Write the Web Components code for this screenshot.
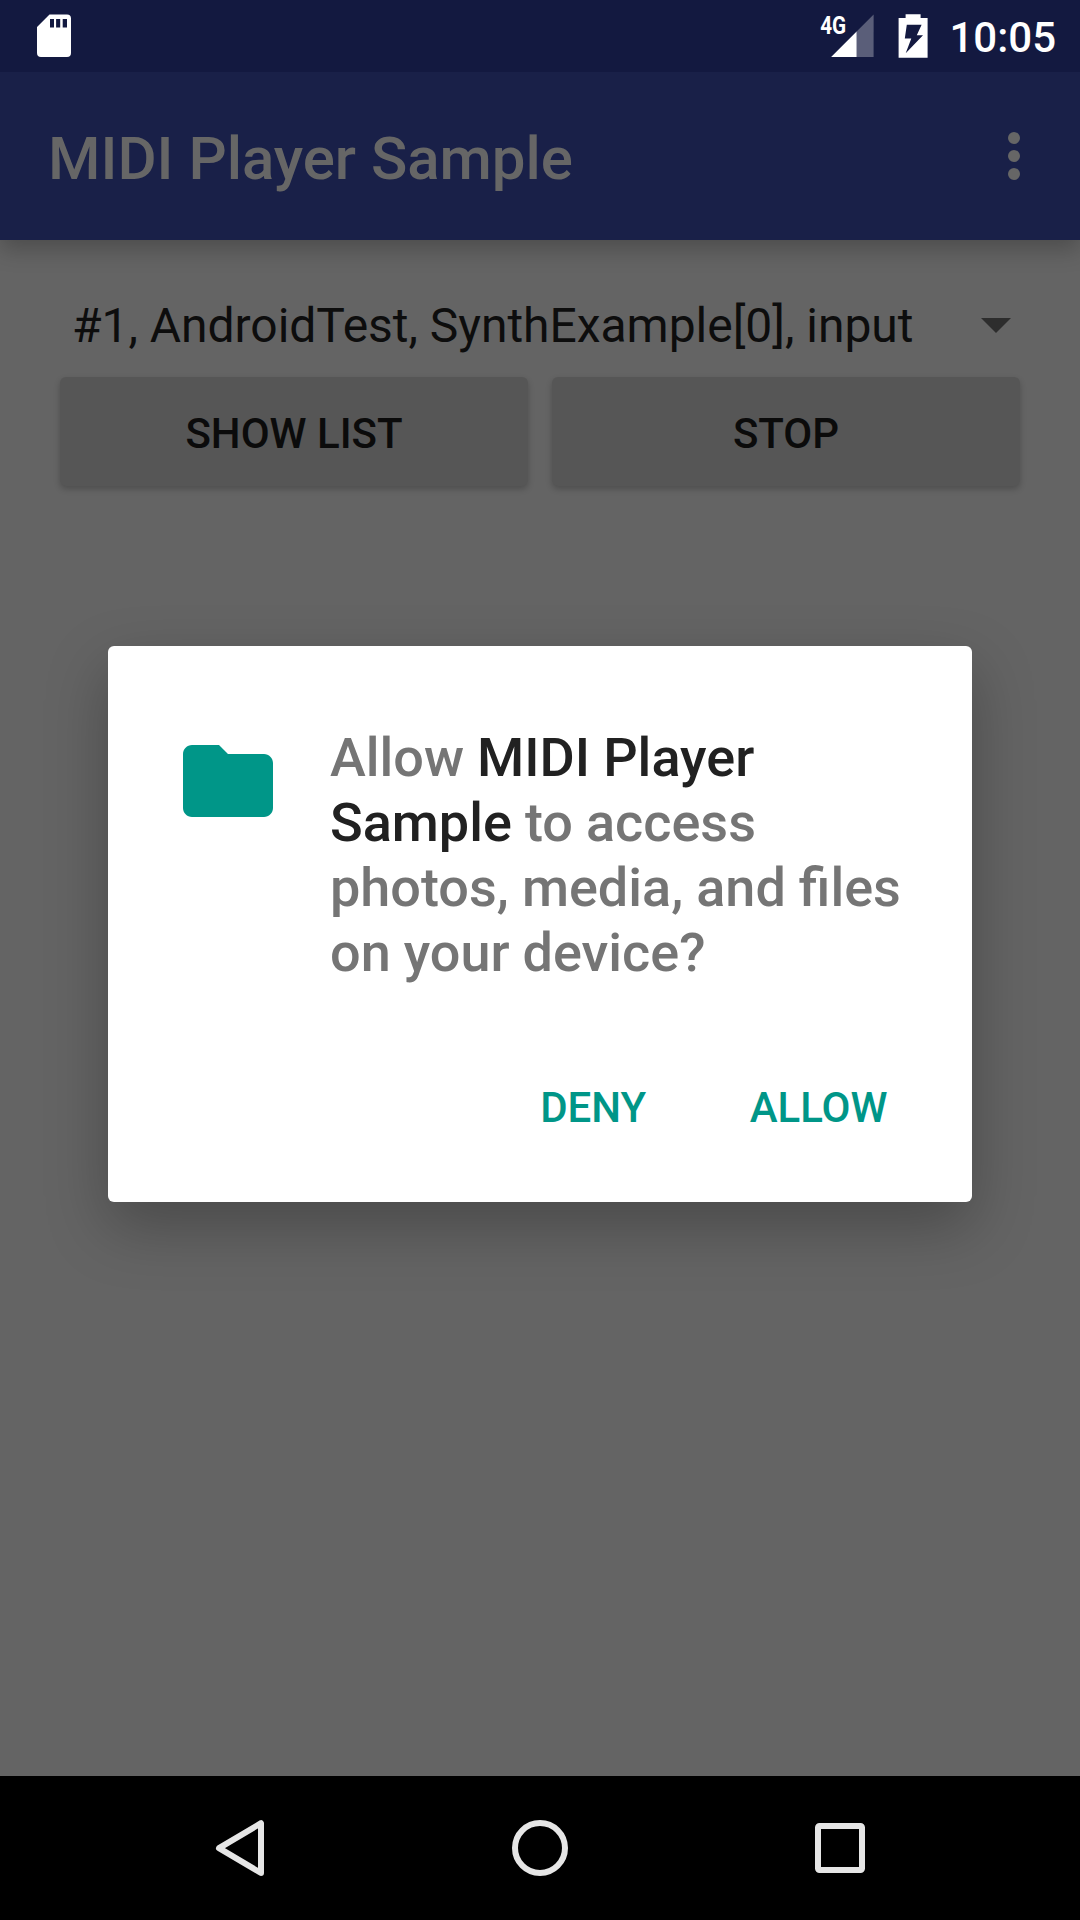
<!DOCTYPE html>
<html lang="en">
<head>
<meta charset="utf-8">
<title>MIDI Player Sample</title>
<style>
html,body{margin:0;padding:0;background:#646464}
body{width:1080px;height:1920px;overflow:hidden;font-family:Roboto,"Noto Sans",sans-serif}
</style>
</head>
<body>
<phone-screen>
  <status-bar slot="status" time="10:05"></status-bar>
  <app-bar slot="bar">MIDI Player Sample</app-bar>
  <device-spinner>#1, AndroidTest, SynthExample[0], input</device-spinner>
  <button-row>
    <raised-button>SHOW LIST</raised-button>
    <raised-button>STOP</raised-button>
  </button-row>
  <permission-dialog slot="dialog">
    <span>Allow <b>MIDI Player<br>Sample</b> to access<br>photos, media, and files<br>on your device?</span>
    <flat-button slot="actions">DENY</flat-button>
    <flat-button slot="actions">ALLOW</flat-button>
  </permission-dialog>
  <nav-bar slot="nav"></nav-bar>
</phone-screen>
<script>
const define = (name, markup, setup) => {
  const template = document.createElement('template');
  template.innerHTML = markup;
  customElements.define(name, class extends HTMLElement {
    constructor() {
      super();
      this.attachShadow({mode: 'open'}).append(template.content.cloneNode(true));
    }
    connectedCallback() { if (setup) setup(this); }
  });
};

define('phone-screen', `<style>
:host{display:flex;flex-direction:column;position:relative;width:1080px;height:1920px;background:#646464;overflow:hidden}
main{flex:1;display:flex;flex-direction:column;padding:48px 48px 0}
.layer{position:absolute;left:108px;top:646px}
</style>
<slot name="status"></slot><slot name="bar"></slot><main><slot></slot></main><slot name="nav"></slot>
<div class="layer"><slot name="dialog"></slot></div>`);

define('status-bar', `<style>
:host{display:flex;height:72px;background:#131940;color:#fff;justify-content:space-between;position:relative;z-index:2}
svg{display:block}
.right{display:flex}
time{font-size:42px;font-weight:500;line-height:72px;padding:2px 24px 0 0;height:70px;white-space:nowrap}
</style>
<svg width="108" height="72" viewBox="0 0 108 72"><path fill="#fff" fill-rule="evenodd" d="M49.5 14.6H67Q71 14.6 71 18.6V53Q71 57 67 57H41Q37 57 37 53V27ZM50 19V27.5H54V19ZM56.1 19V27.5H60.2V19ZM62.7 19V27.5H67V19Z"/></svg>
<div class="right">
<svg width="140" height="72" viewBox="809.4 0 140 72"><text x="820.6" y="33.6" fill="#fff" font-size="26.5" font-weight="700" textLength="26" lengthAdjust="spacingAndGlyphs">4G</text>
<path fill="#5a5e79" d="M857 31.5L874 14.5V57H857Z"/><path fill="#fff" d="M831.5 57L857 31.5V57Z"/>
<path fill="#fff" fill-rule="evenodd" d="M899 18H906V14.3H921V18H928V57.7H899ZM907.2 24.8L905.2 38.6H911.7L906.1 53.2L923.4 35.2H917.2L922 24.8Z"/></svg>
<time></time></div>`, el => { el.shadowRoot.querySelector('time').textContent = el.getAttribute('time'); });

define('app-bar', `<style>
:host{display:flex;align-items:center;justify-content:space-between;height:168px;background:#192048;color:#666;font-size:60px;font-weight:500;position:relative;z-index:1;box-shadow:0 9px 22px rgba(0,0,0,.24)}
.title{padding:0 0 0 48px;line-height:72px;margin-top:6px;letter-spacing:-.03px}
</style>
<div class="title"><slot></slot></div>
<svg width="132" height="168" viewBox="948 72 132 168" fill="#666"><circle cx="1014" cy="138" r="6"/><circle cx="1014" cy="156" r="6"/><circle cx="1014" cy="174" r="6"/></svg>`);

define('device-spinner', `<style>
:host{display:flex;align-items:center;justify-content:space-between;height:77px;padding:0 21px 0 24px;color:#0d0d0d;font-size:48px;line-height:75px;white-space:nowrap;letter-spacing:-.03px}
span{margin-top:-2px}
svg{display:block;margin-top:-2px}
</style><span><slot></slot></span><svg width="30" height="15" viewBox="0 0 30 15"><path d="M0 0H30L15 15Z" fill="#2d2d2d"/></svg>`);

define('button-row', `<style>:host{display:flex;gap:24px;padding:12px}::slotted(*){flex:1}</style><slot></slot>`);

define('raised-button', `<style>
:host{display:flex;align-items:center;justify-content:center;height:109px;border-radius:6px;background:#565656;color:#0b0b0b;font-size:42px;font-weight:500;box-shadow:0 3px 6px rgba(0,0,0,.22)}
span{line-height:50px;margin-top:4px}
</style><span><slot></slot></span>`);

define('permission-dialog', `<style>
:host{display:flex;flex-direction:column;justify-content:space-between;box-sizing:border-box;width:864px;height:556px;padding:79px 66px 69px 66px;background:#fff;border-radius:6px;box-shadow:0 24px 62px rgba(0,0,0,.27)}
.content{display:flex;gap:48px}
svg{display:block;flex:none;margin-top:2px}
.message{color:#757575;font-size:54px;font-weight:500;line-height:65px;white-space:nowrap;word-spacing:-.4px}
::slotted(span){display:block}
.actions{display:flex;justify-content:flex-end;gap:103.5px;padding-right:18.5px}
</style>
<div class="content"><svg width="108" height="108" viewBox="0 0 24 24"><path fill="#009688" d="M10 4H4c-1.1 0-2 .9-2 2v12c0 1.1.9 2 2 2h16c1.1 0 2-.9 2-2V8c0-1.1-.9-2-2-2h-8l-2-2z"/></svg>
<div class="message"><slot></slot></div></div>
<div class="actions"><slot name="actions"></slot></div>`, el => {
  for (const b of el.querySelectorAll('b')) { b.style.color = '#212121'; b.style.fontWeight = '500'; }
});

define('flat-button', `<style>:host{display:block;color:#009688;font-size:42px;font-weight:500;line-height:50px}</style><slot></slot>`);

define('nav-bar', `<style>
:host{display:flex;justify-content:center;gap:156px;height:144px;background:#000}
svg{display:block}
</style>
<svg width="144" height="144" viewBox="168 1776 144 144"><path d="M261 1823.2V1873L219 1848.2Z" fill="none" stroke="#e6e6e6" stroke-width="6" stroke-linejoin="round"/></svg>
<svg width="144" height="144" viewBox="468 1776 144 144"><circle cx="540" cy="1848" r="25" fill="none" stroke="#e6e6e6" stroke-width="6"/></svg>
<svg width="144" height="144" viewBox="768 1776 144 144"><rect x="818" y="1826" width="44" height="44" rx="1.5" fill="none" stroke="#e6e6e6" stroke-width="6"/></svg>`);
</script>
</body>
</html>
